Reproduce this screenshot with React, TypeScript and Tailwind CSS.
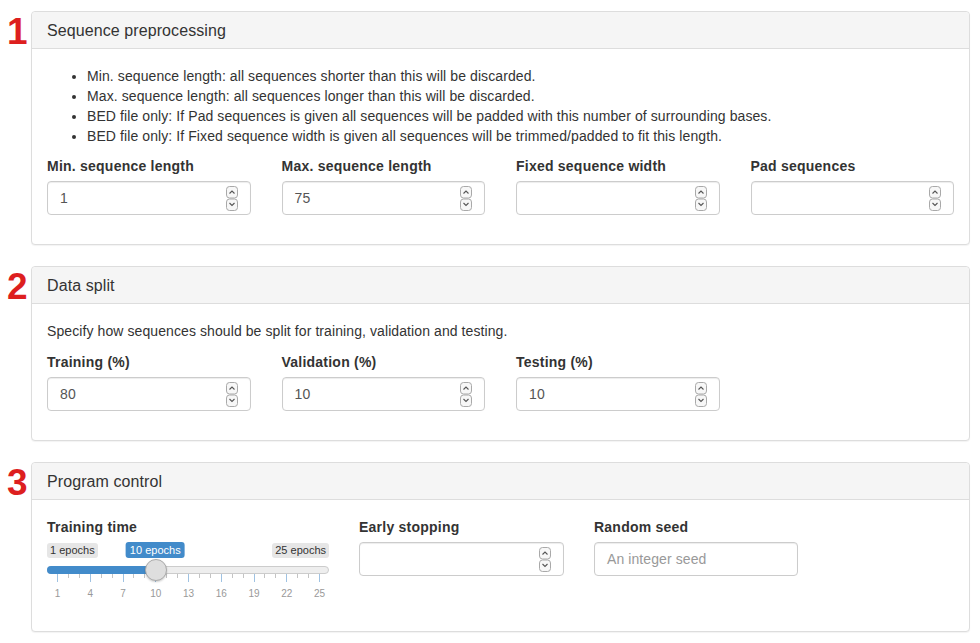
import type { ReactNode } from 'react';

const font = { fontFamily: '"Liberation Sans", Arial, Helvetica, sans-serif' };

function Spinner() {
  return (
    <svg width="12" height="25" viewBox="0 0 12 25" className="shrink-0">
      <rect x="0.5" y="0.5" width="11" height="11.5" rx="3" fill="#f7f7f7" stroke="#a9a9a9" />
      <path d="M3.5 7.5 L6 5 L8.5 7.5" fill="none" stroke="#555" strokeWidth="1.1" />
      <rect x="0.5" y="13" width="11" height="11.5" rx="3" fill="#f7f7f7" stroke="#a9a9a9" />
      <path d="M3.5 17 L6 19.5 L8.5 17" fill="none" stroke="#555" strokeWidth="1.1" />
    </svg>
  );
}

function FieldLabel({ children }: { children: ReactNode }) {
  return <label className="mb-[5px] text-[14px] leading-[20px] font-bold tracking-[0.23px] text-[#333]">{children}</label>;
}

function NumberInput({ label, value }: { label: string; value?: string }) {
  return (
    <div className="flex flex-col">
      <FieldLabel>{label}</FieldLabel>
      <div className="flex h-[34px] items-center rounded-[4px] border border-[#ccc] bg-white pl-[12px] pr-[12px] shadow-[inset_0_1px_1px_rgba(0,0,0,0.075)]">
        <span className="flex-1 text-[14px] text-[#555]">{value}</span>
        <Spinner />
      </div>
    </div>
  );
}

function TextInput({ label, placeholder }: { label: string; placeholder: string }) {
  return (
    <div className="flex flex-col">
      <FieldLabel>{label}</FieldLabel>
      <div className="flex h-[34px] items-center rounded-[4px] border border-[#ccc] bg-white px-[12px] shadow-[inset_0_1px_1px_rgba(0,0,0,0.075)]">
        <span className="text-[14px] text-[#999]">{placeholder}</span>
      </div>
    </div>
  );
}

function Panel({ num, title, children }: { num: string; title: string; children: ReactNode }) {
  return (
    <div className="mb-[21px] flex">
      <div className="w-[32px] shrink-0 pl-[7px] pt-[2px] text-[37px] leading-[37px] font-bold text-[#dd1f1f]">{num}</div>
      <div className="-ml-px flex-1 rounded-[4px] border border-[#ddd] bg-white shadow-[0_1px_1px_rgba(0,0,0,0.05)]">
        <div className="rounded-t-[4px] border-b border-[#ddd] bg-[#f5f5f5] px-[15px] pt-[11px] pb-[9px] text-[16px] leading-[16px] text-[#333]">
          {title}
        </div>
        <div className="px-[15px] pt-[17px] pb-[14px]">{children}</div>
      </div>
    </div>
  );
}

const ticks = Array.from({ length: 25 }, (_, i) => i + 1);

function Slider() {
  const left = 10;
  const span = 262;
  const pos = (v: number) => left + ((v - 1) * span) / 24;
  return (
    <div className="relative h-[60px] w-[282px] tracking-normal">
      <span className="absolute left-0 top-[1px] rounded-[3px] bg-[#e6e6e6] px-[3px] text-[11px] leading-[15px] text-[#333]">1 epochs</span>
      <span className="absolute right-0 top-[1px] rounded-[3px] bg-[#e6e6e6] px-[3px] text-[11px] leading-[15px] text-[#333]">25 epochs</span>
      <span
        className="absolute top-[0px] -translate-x-1/2 rounded-[3px] bg-[#428bca] px-[4px] text-[11px] leading-[16px] whitespace-nowrap text-white"
        style={{ left: pos(10) }}
      >
        10 epochs
      </span>
      <div className="absolute left-0 right-0 top-[24px] h-[8px] rounded-full border border-[#ccc] bg-[#eee]" />
      <div className="absolute left-0 top-[24px] h-[8px] rounded-l-full bg-[#428bca]" style={{ width: pos(10) }} />
      {ticks.map((t) => {
        const major = (t - 1) % 3 === 0;
        return (
          <div key={t}>
            <div
              className={major ? 'absolute top-[32px] h-[8px] w-px bg-[#9fc2e2]' : 'absolute top-[32px] h-[4px] w-px bg-[#c4c4c4]'}
              style={{ left: pos(t) }}
            />
            {major && (
              <span
                className="absolute top-[46px] -translate-x-1/2 text-[10px] leading-[12px] text-[#999]"
                style={{ left: pos(t) + 0.5 }}
              >
                {t}
              </span>
            )}
          </div>
        );
      })}
      <div
        className="absolute top-[17px] h-[22px] w-[22px] -translate-x-1/2 rounded-full border border-[#aaa] bg-[#dedede] shadow-[0_1px_2px_rgba(0,0,0,0.2)]"
        style={{ left: pos(10) + 0.5 }}
      />
    </div>
  );
}

export default function App() {
  return (
    <div className="min-h-[643px] bg-white pt-[11px] pr-[10px] text-[14px] leading-[20px] tracking-[0.09px] text-[#333]" style={font}>
      <Panel num="1" title="Sequence preprocessing">
        <ul className="mb-[10px] list-disc pl-[40px]">
          <li>Min. sequence length: all sequences shorter than this will be discarded.</li>
          <li>Max. sequence length: all sequences longer than this will be discarded.</li>
          <li>BED file only: If Pad sequences is given all sequences will be padded with this number of surrounding bases.</li>
          <li>BED file only: If Fixed sequence width is given all sequences will be trimmed/padded to fit this length.</li>
        </ul>
        <div className="mb-[15px] grid grid-cols-4 gap-x-[31px]">
          <NumberInput label="Min. sequence length" value="1" />
          <NumberInput label="Max. sequence length" value="75" />
          <NumberInput label="Fixed sequence width" />
          <NumberInput label="Pad sequences" />
        </div>
      </Panel>
      <Panel num="2" title="Data split">
        <p className="mb-[11px]">Specify how sequences should be split for training, validation and testing.</p>
        <div className="mb-[15px] grid grid-cols-4 gap-x-[31px]">
          <NumberInput label="Training (%)" value="80" />
          <NumberInput label="Validation (%)" value="10" />
          <NumberInput label="Testing (%)" value="10" />
        </div>
      </Panel>
      <Panel num="3" title="Program control">
        <div className="mb-[15px] flex gap-x-[30px]">
          <div className="flex w-[282px] flex-col">
            <FieldLabel>Training time</FieldLabel>
            <Slider />
          </div>
          <div className="w-[205px]">
            <NumberInput label="Early stopping" />
          </div>
          <div className="w-[204px]">
            <TextInput label="Random seed" placeholder="An integer seed" />
          </div>
        </div>
      </Panel>
    </div>
  );
}
